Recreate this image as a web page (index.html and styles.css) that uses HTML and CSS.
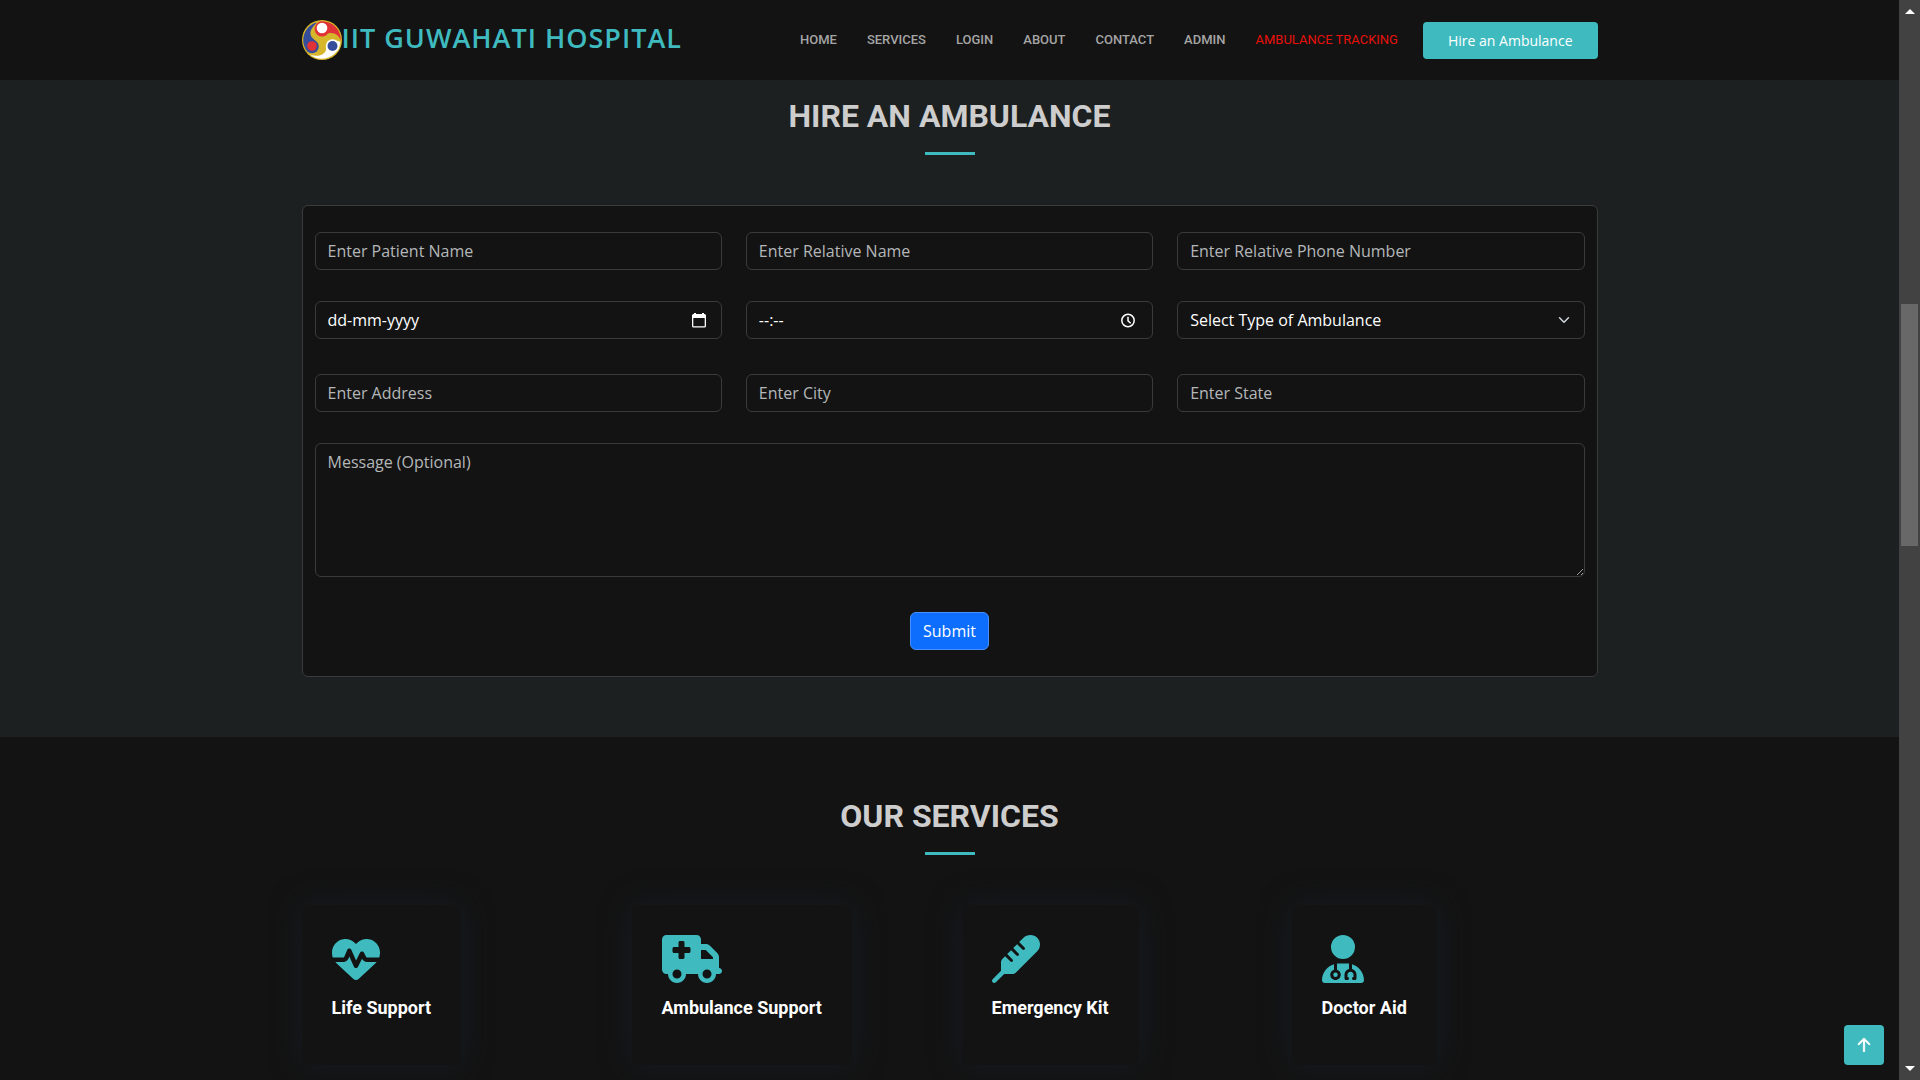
FILE: index.html
```html
<!DOCTYPE html>
<html lang="en">
<head>
<meta charset="utf-8">
<title>IIT Guwahati Hospital</title>
<link rel="stylesheet" href="styles.css">
</head>
<body>
<div class="page">
  <header class="header">
    <div class="container header-inner">
      <a class="brand" href="#">
        <svg class="brand-logo" viewBox="0 0 40 40" aria-hidden="true">
          <circle cx="20" cy="20" r="20" fill="#d6b62a"/>
          <path d="M1.200 20A18.800 18.800 0 0 1 15 2.200C12 6 8 9 8.500 14C9 19 15 20 16 25C14 22 9 20 5 23C3 24.500 3.500 29 5 31C2.500 28 1.200 24 1.200 20Z" fill="#364d9c"/>
          <circle cx="10" cy="26.500" r="6.800" fill="#364d9c"/>
          <path d="M20 1.200A18.800 18.800 0 0 1 38.800 21C37 15 32 12 26 13.500A6.500 6.500 0 1 1 14 5C15 3 17 1.200 20 1.200Z" fill="#e13238"/>
          <path d="M38.500 22A18.800 18.800 0 0 1 8 34.500C14 37 22 36 24 30C24.500 22 31 18 38.500 22Z" fill="#fff"/>
          <circle cx="30.500" cy="26" r="6.800" fill="#fff"/>
          <circle cx="20" cy="8" r="5.300" fill="#fff"/>
          <circle cx="10" cy="26" r="4.800" fill="#e13238"/>
          <circle cx="30.500" cy="26" r="5" fill="#364d9c"/>
        </svg>
        <span class="brand-name">IIT GUWAHATI HOSPITAL</span>
      </a>
      <nav class="nav">
        <a href="#">Home</a>
        <a href="#services">Services</a>
        <a href="#">Login</a>
        <a href="#">About</a>
        <a href="#">Contact</a>
        <a href="#">Admin</a>
        <a class="nav-alert" href="#">Ambulance Tracking</a>
      </nav>
      <a class="cta" href="#hire">Hire an Ambulance</a>
    </div>
  </header>

  <main class="main">
    <section class="section section-hire" id="hire">
      <div class="container">
        <h2 class="section-title">Hire an Ambulance</h2>
        <form class="hire-form">
          <div class="row">
            <input class="field" type="text" placeholder="Enter Patient Name" aria-label="Patient name">
            <input class="field" type="text" placeholder="Enter Relative Name" aria-label="Relative name">
            <input class="field" type="tel" placeholder="Enter Relative Phone Number" aria-label="Relative phone number">
          </div>
          <div class="row">
            <div class="field picker">
              <input class="picker-input" type="text" placeholder="dd-mm-yyyy" aria-label="Date">
              <button class="picker-button" type="button" aria-label="Choose date">
                <svg viewBox="0 0 14 15" width="14" height="15"><path fill-rule="evenodd" d="M2 0H4V1H10V0H12V1H12.500A1.500 1.500 0 0 1 14 2.500V13A1.500 1.500 0 0 1 12.500 14.500H1.500A1.500 1.500 0 0 1 0 13V2.500A1.500 1.500 0 0 1 1.500 1H2ZM1.300 5V13.200H12.700V5Z"/></svg>
              </button>
            </div>
            <div class="field picker">
              <input class="picker-input" type="text" placeholder="--:--" aria-label="Time">
              <button class="picker-button" type="button" aria-label="Choose time">
                <svg viewBox="0 0 16 15" width="16" height="15"><g fill="none" stroke="#fff" stroke-width="1.500"><circle cx="7" cy="7.500" r="6.200"/><path d="M7 3.800V7.800L9.700 10.200"/></g></svg>
              </button>
            </div>
            <select class="field select" aria-label="Type of ambulance">
              <option>Select Type of Ambulance</option>
              <option>Basic Life Support</option>
              <option>Advanced Life Support</option>
            </select>
          </div>
          <div class="row row-spaced">
            <input class="field" type="text" placeholder="Enter Address" aria-label="Address">
            <input class="field" type="text" placeholder="Enter City" aria-label="City">
            <input class="field" type="text" placeholder="Enter State" aria-label="State">
          </div>
          <textarea class="field message" rows="5" placeholder="Message (Optional)" aria-label="Message"></textarea>
          <button class="submit row-spaced" type="submit">Submit</button>
        </form>
      </div>
    </section>

    <section class="section section-services" id="services">
      <div class="container">
        <h2 class="section-title">Our Services</h2>
        <div class="services">
          <article class="service">
            <svg class="service-icon" viewBox="0 0 512 512" aria-hidden="true"><path d="M228.300 469.100L47.600 300.400c-4.200-3.900-8.200-8.100-11.900-12.400h87c22.600 0 43-13.600 51.700-34.500l10.500-25.200 49.300 109.500c3.800 8.500 12.100 14 21.400 14.100s17.800-5 22-13.300L320 253.700l1.700 3.400c9.500 19 28.900 31 50.100 31H476.300c-3.700 4.300-7.700 8.500-11.900 12.400L283.700 469.100c-7.500 7-17.400 10.900-27.700 10.900s-20.200-3.900-27.700-10.900zM503.700 240h-132c-3 0-5.800-1.700-7.200-4.400l-23.200-46.300c-4.100-8.100-12.400-13.300-21.500-13.300s-17.400 5.100-21.500 13.300l-41.400 82.800L205.900 158.200c-3.900-8.700-12.700-14.300-22.200-14.100s-18.100 5.900-21.800 14.800l-31.800 76.300c-1.200 3-4.200 4.900-7.400 4.900H16c-2.600 0-5 .4-7.300 1.100C3 225.200 0 208.200 0 190.900v-5.800c0-69.900 50.500-129.500 119.400-141C165 36.500 211.400 51.400 244 84l12 12 12-12c32.600-32.600 79-47.500 124.600-39.900C461.500 55.600 512 115.200 512 185.100v5.800c0 16.900-2.800 33.500-8.300 49.100z"/></svg>
            <h3 class="service-name">Life Support</h3>
          </article>
          <article class="service">
            <svg class="service-icon" viewBox="0 0 640 512" aria-hidden="true"><path d="M0 48C0 21.500 21.500 0 48 0H368c26.500 0 48 21.500 48 48V96h50.700c17 0 33.300 6.700 45.300 18.700L589.300 192c12 12 18.700 28.300 18.700 45.300V256v32 64c17.700 0 32 14.300 32 32s-14.300 32-32 32H576c0 53-43 96-96 96s-96-43-96-96H256c0 53-43 96-96 96s-96-43-96-96H48c-26.500 0-48-21.500-48-48V48zM416 256H544V237.300L466.700 160H416v96zM160 464a48 48 0 1 0 0-96 48 48 0 1 0 0 96zm368-48a48 48 0 1 0-96 0 48 48 0 1 0 96 0zM176 80v48l-48 0c-8.800 0-16 7.200-16 16v32c0 8.800 7.200 16 16 16h48v48c0 8.800 7.200 16 16 16h32c8.800 0 16-7.200 16-16V192h48c8.800 0 16-7.200 16-16V144c0-8.800-7.200-16-16-16H240V80c0-8.800-7.200-16-16-16H192c-8.800 0-16 7.200-16 16z"/></svg>
            <h3 class="service-name">Ambulance Support</h3>
          </article>
          <article class="service">
            <svg class="service-icon" viewBox="0 0 512 512" aria-hidden="true"><path d="M96 382.100V293.300c0-14.900 5.900-29.100 16.400-39.600l27.300-27.300 57 57c6.200 6.200 16.400 6.200 22.600 0s6.200-16.400 0-22.600l-57-57 41.400-41.400 57 57c6.200 6.200 16.400 6.200 22.600 0s6.200-16.400 0-22.600l-57-57 41.400-41.400 57 57c6.200 6.200 16.400 6.200 22.600 0s6.200-16.400 0-22.600l-57-57 45.500-45.500C355.200 9.900 382.600 0 410.800 0C466.700 0 512 45.300 512 101.200c0 26.800-10.700 52.600-29.600 71.600L258.300 397.300C246.300 409.300 235 416 218.700 416H129.900L41 505c-9.400 9.400-24.600 9.400-33.900 0s-9.400-24.600 0-33.900l89-89z"/></svg>
            <h3 class="service-name">Emergency Kit</h3>
          </article>
          <article class="service">
            <svg class="service-icon" viewBox="0 0 448 512" aria-hidden="true"><path d="M224 256a128 128 0 1 0 0-256 128 128 0 1 0 0 256zm-96 55.200C54 332.900 0 401.300 0 482.300C0 498.700 13.300 512 29.700 512H418.300c16.400 0 29.700-13.300 29.700-29.700c0-81-54-149.400-128-171.100V362c27.600 7.100 48 32.200 48 62v40c0 8.800-7.200 16-16 16H336c-8.800 0-16-7.200-16-16s7.200-16 16-16V424c0-17.700-14.300-32-32-32s-32 14.300-32 32v24c8.800 0 16 7.200 16 16s-7.200 16-16 16H256c-8.800 0-16-7.200-16-16V424c0-29.800 20.400-54.900 48-62V304.900c-6-.6-12.100-.9-18.300-.9H178.300c-6.200 0-12.300 .3-18.300 .9v65.400c23.100 6.900 40 28.300 40 53.700c0 30.900-25.100 56-56 56s-56-25.100-56-56c0-25.400 16.900-46.800 40-53.700V311.200zM144 448a24 24 0 1 0 0-48 24 24 0 1 0 0 48z"/></svg>
            <h3 class="service-name">Doctor Aid</h3>
          </article>
        </div>
      </div>
    </section>
  </main>
</div>

<div class="scrollbar" aria-hidden="true">
  <svg class="scroll-arrow" viewBox="0 0 10 5"><path d="M5 0L10 5H0Z"/></svg>
  <div class="scroll-track"><div class="scroll-thumb"></div></div>
  <svg class="scroll-arrow" viewBox="0 0 10 5"><path d="M5 5L10 0H0Z"/></svg>
</div>

<a class="back-to-top" href="#" aria-label="Back to top">
  <svg viewBox="0 0 16 16" width="28" height="28"><path stroke="#fff" stroke-width=".2" d="M8 12a.5.5 0 0 0 .5-.5V5.707l2.146 2.147a.5.5 0 0 0 .708-.708l-3-3a.5.5 0 0 0-.708 0l-3 3a.5.5 0 1 0 .708.708L7.500 5.707V11.500a.5.5 0 0 0 .5.5z"/></svg>
</a>
</body>
</html>
```
FILE: styles.css
```css
:root {
  --accent: #3fbbc0;
  --dark: #131313;
  --tint: #1c2021;
  --border: #3b3b3b;
}

* {
  box-sizing: border-box;
}

body {
  margin: 0;
  display: flex;
  background: var(--dark);
  color: #fff;
  font-family: "Open Sans", sans-serif;
  font-size: 16px;
  line-height: 24px;
}

a {
  color: inherit;
  text-decoration: none;
}

svg {
  display: block;
  fill: currentColor;
}

.page {
  flex: 1;
  min-width: 0;
  min-height: 100vh;
}

.container {
  width: 100%;
  max-width: 1320px;
  margin: 0 auto;
  padding: 0 12px;
}

/* Header */
.header {
  position: sticky;
  top: 0;
  z-index: 2;
  padding: 20px 0;
  background: var(--dark);
}

.header-inner {
  display: flex;
  align-items: center;
}

.brand {
  display: flex;
  align-items: center;
  margin-right: auto;
  color: var(--accent);
}

.brand-logo {
  width: 40px;
  height: 40px;
}

.brand-name {
  font-size: 27px;
  font-weight: 600;
  line-height: 36px;
  padding-bottom: 4px;
  letter-spacing: 1px;
}

.nav {
  display: flex;
  gap: 30px;
  color: #a5a5a5;
  font-family: Roboto, sans-serif;
  font-size: 13px;
  font-weight: 500;
  line-height: 20px;
  text-transform: uppercase;
}

.nav-alert {
  color: #e8110b;
  font-weight: 400;
}

.cta {
  margin-left: 25px;
  padding: 8px 25px;
  border-radius: 4px;
  background: var(--accent);
  font-size: 14px;
  line-height: 21px;
}

/* Sections */
.section {
  padding: 60px 0;
}

.section-hire {
  padding-top: 17px;
  background: var(--tint);
}

.section-services {
  padding-bottom: 15px;
}

.section-title {
  display: flex;
  flex-direction: column;
  align-items: center;
  gap: 17px;
  margin: 0 0 50px;
  color: #cdcdcd;
  font-family: Roboto, sans-serif;
  font-size: 32px;
  font-weight: 700;
  line-height: 38px;
  text-transform: uppercase;
}

.section-title::after {
  content: "";
  width: 50px;
  height: 3px;
  background: var(--accent);
}

/* Form */
.hire-form {
  display: flex;
  flex-direction: column;
  gap: 31px;
  padding: 26px 12px;
  border: 1px solid var(--border);
  border-radius: 6px;
  background: var(--dark);
}

.row {
  display: grid;
  grid-template-columns: repeat(3, 1fr);
  gap: 24px;
}

.row-spaced {
  margin-top: 4px;
}

.field {
  width: 100%;
  height: 38px;
  padding: 6px 12px;
  border: 1px solid var(--border);
  border-radius: 6px;
  background: transparent;
  color: #fff;
  font: inherit;
}

.field::placeholder {
  color: #b4b7b9;
  opacity: 1;
}

.picker {
  display: flex;
  align-items: center;
  padding-right: 15px;
}

.picker-input {
  flex: 1;
  min-width: 0;
  padding: 0;
  border: 0;
  background: transparent;
  color: #fff;
  font: inherit;
}

.picker-input::placeholder {
  color: #fff;
  opacity: 1;
}

.picker-button {
  padding: 0;
  border: 0;
  background: transparent;
  color: #fff;
}

.select {
  appearance: none;
  background: url("data:image/svg+xml,%3Csvg xmlns='http://www.w3.org/2000/svg' viewBox='0 0 16 16'%3E%3Cpath fill='none' stroke='%23ced4da' stroke-linecap='round' stroke-linejoin='round' stroke-width='2' d='m2 5 6 6 6-6'/%3E%3C/svg%3E") no-repeat right 12px center / 16px 12px;
}

.message {
  display: block;
  height: 134px;
  resize: vertical;
}

.submit {
  align-self: center;
  padding: 6px 12px;
  border: 1px solid #4a90fe;
  border-radius: 6px;
  background: #0d6efd;
  color: #fff;
  font: inherit;
}

/* Services */
.services {
  display: grid;
  grid-template-columns: repeat(4, 1fr);
  gap: 24px;
  justify-items: start;
}

.service {
  min-height: 160px;
  padding: 30px;
  border-radius: 8px;
  background: var(--dark);
  box-shadow: 0 0 30px #171b22;
}

.service-icon {
  height: 48px;
  margin-bottom: 14px;
  color: var(--accent);
}

.service-name {
  margin: 0;
  font-family: Roboto, sans-serif;
  font-size: 18px;
  font-weight: 700;
  line-height: 22px;
}

/* Scrollbar */
.scrollbar {
  position: sticky;
  top: 0;
  display: flex;
  flex-direction: column;
  align-items: center;
  gap: 9px;
  width: 21px;
  height: 100vh;
  padding: 9px 2px;
  background: #424242;
}

.scroll-arrow {
  width: 10px;
  height: 5px;
}

.scroll-track {
  flex: 1;
  width: 100%;
  padding-top: 281px;
}

.scroll-thumb {
  height: 242px;
  background: #686868;
}

.back-to-top {
  position: fixed;
  right: 36px;
  bottom: 15px;
  z-index: 3;
  display: grid;
  place-items: center;
  width: 40px;
  height: 40px;
  border-radius: 4px;
  background: var(--accent);
}
```
